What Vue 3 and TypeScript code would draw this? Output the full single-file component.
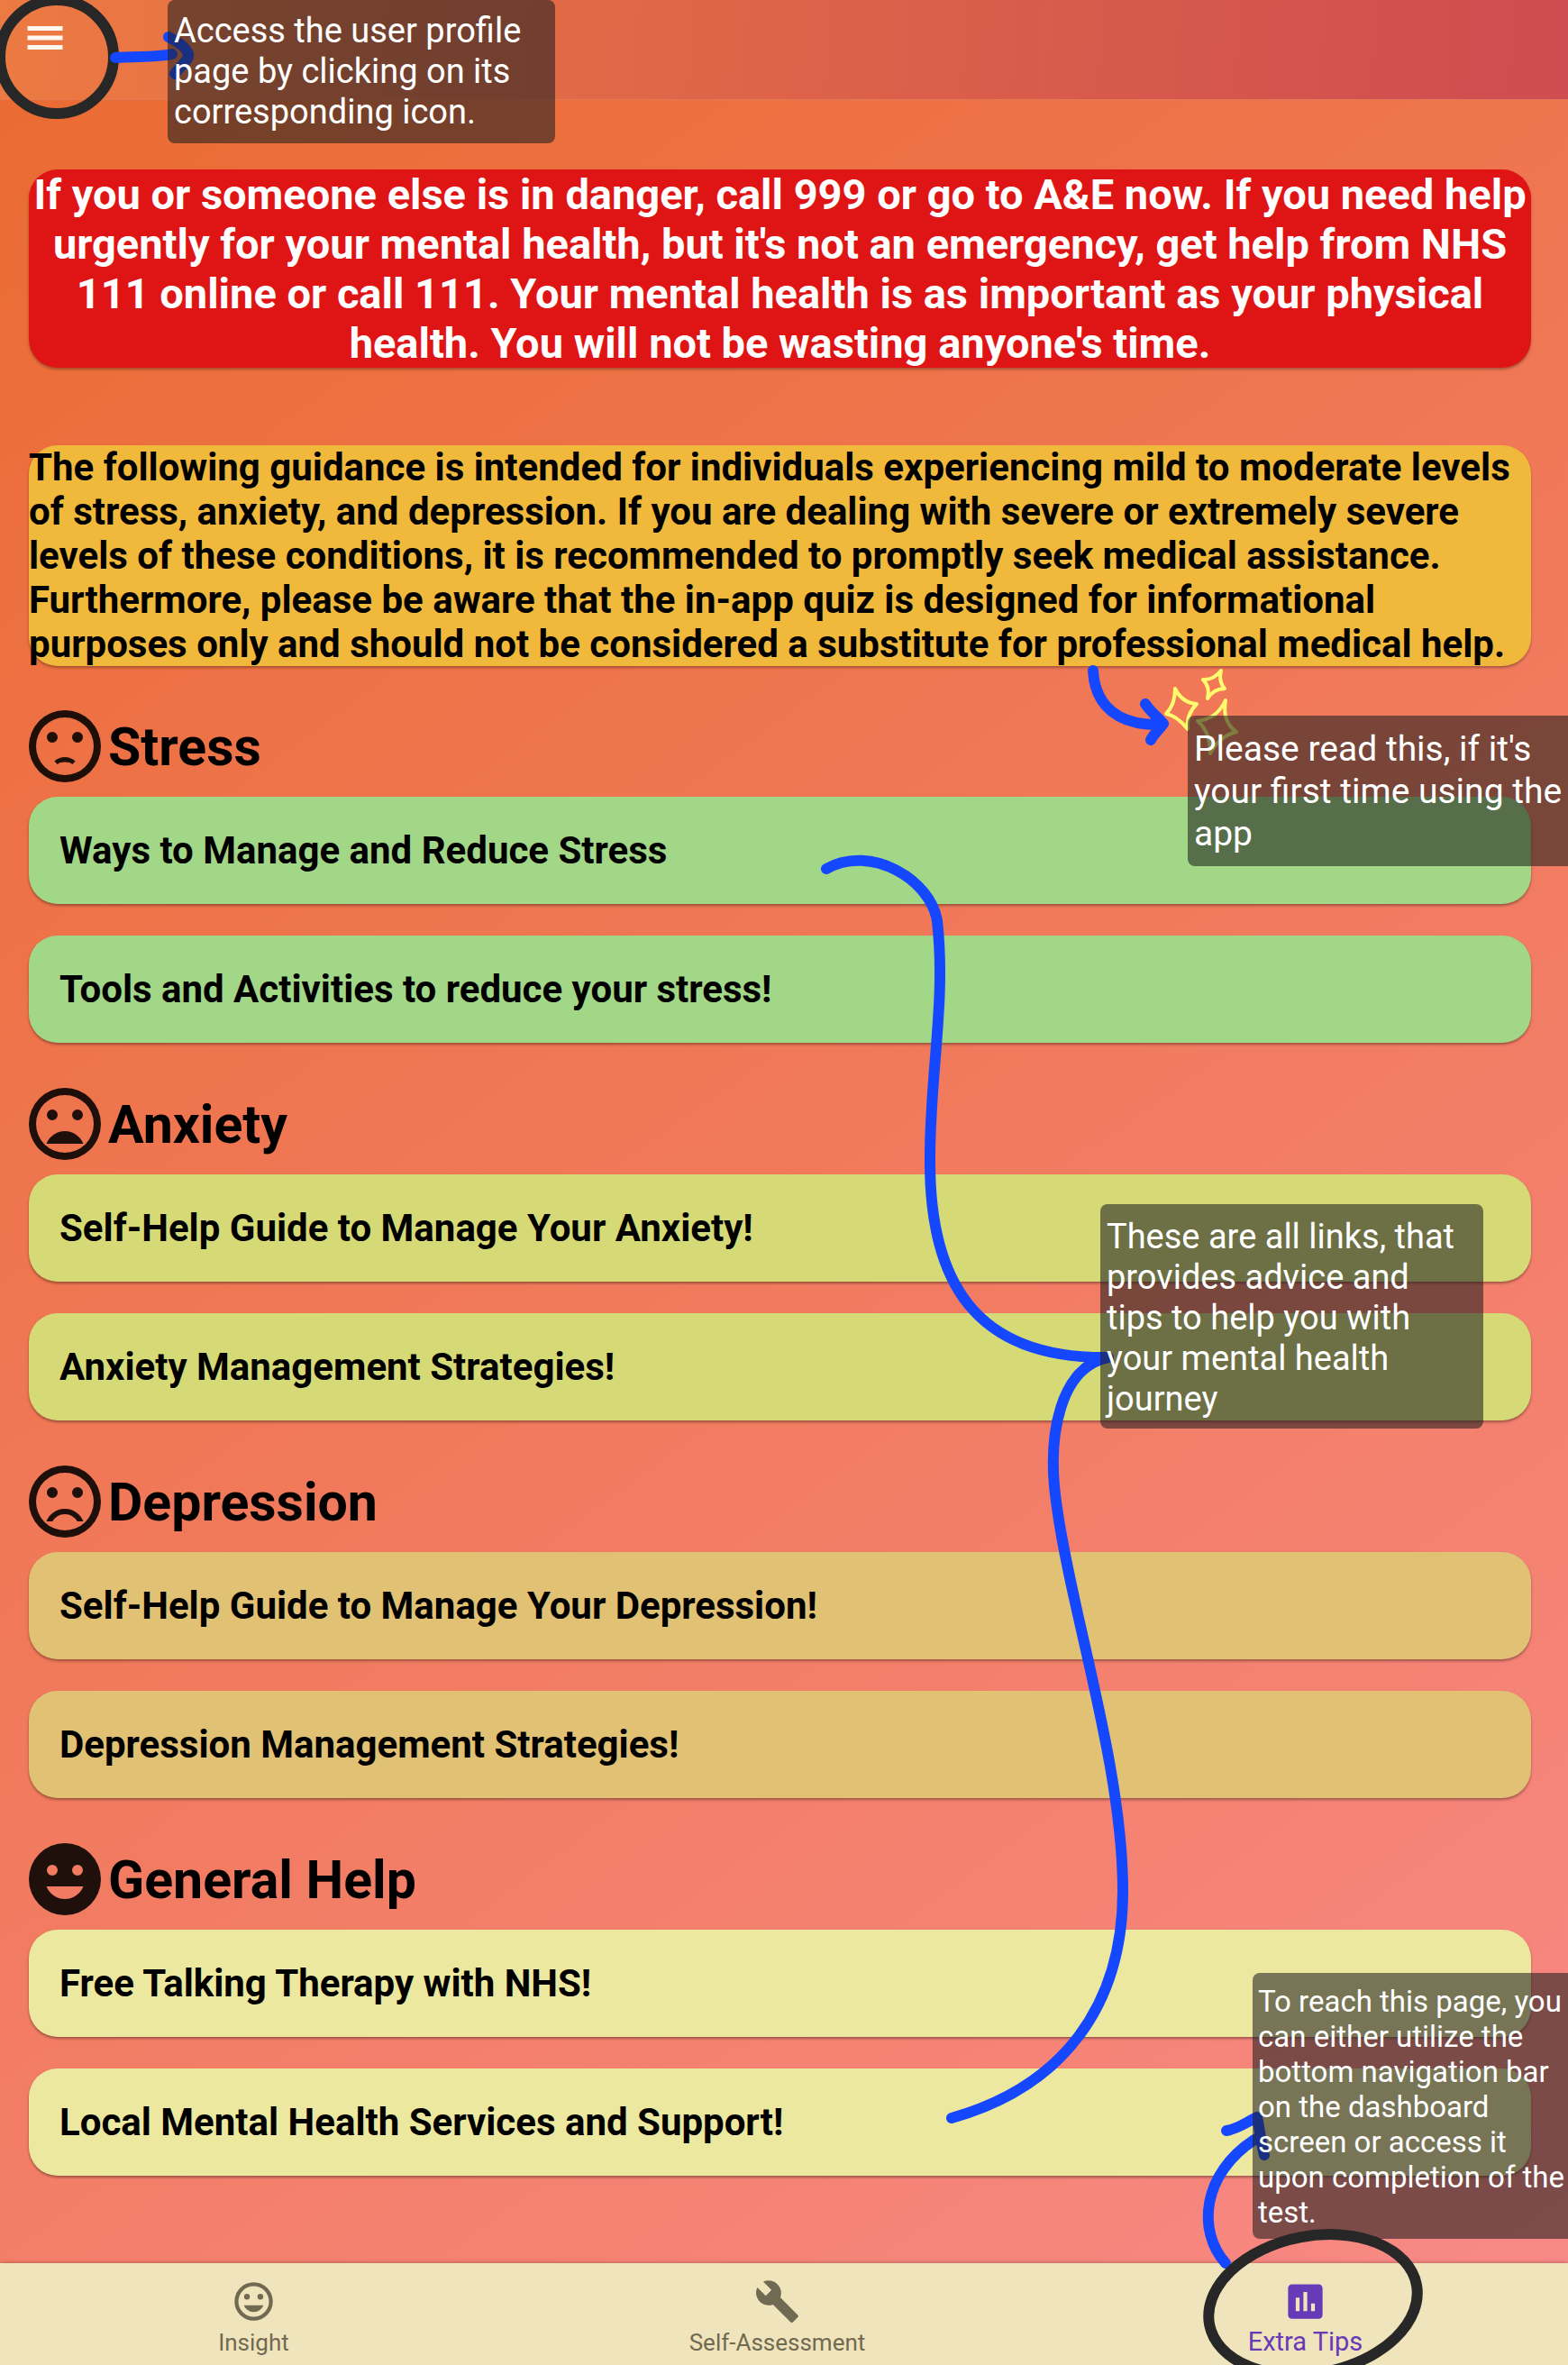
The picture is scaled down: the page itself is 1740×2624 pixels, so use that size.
<script setup lang="ts">
type Mood = 'uneasy' | 'anxious' | 'sad' | 'happy'

interface Topic {
  title: string
  mood: Mood
  tone: string
  links: string[]
}

const topics: Topic[] = [
  {
    title: 'Stress',
    mood: 'uneasy',
    tone: 'green',
    links: ['Ways to Manage and Reduce Stress', 'Tools and Activities to reduce your stress!'],
  },
  {
    title: 'Anxiety',
    mood: 'anxious',
    tone: 'lime',
    links: ['Self-Help Guide to Manage Your Anxiety!', 'Anxiety Management Strategies!'],
  },
  {
    title: 'Depression',
    mood: 'sad',
    tone: 'sand',
    links: ['Self-Help Guide to Manage Your Depression!', 'Depression Management Strategies!'],
  },
  {
    title: 'General Help',
    mood: 'happy',
    tone: 'cream',
    links: ['Free Talking Therapy with NHS!', 'Local Mental Health Services and Support!'],
  },
]

const mouths: Record<Mood, string> = {
  uneasy: 'M12 15c-1.1 0-2.1.4-2.9 1.1l.8.9c.6-.4 1.3-.6 2.1-.6s1.5.2 2.1.6l.8-.9c-.8-.7-1.8-1.1-2.9-1.1z',
  anxious: 'M12 14c-2.33 0-4.31 1.46-5.11 3.5h10.22c-.8-2.04-2.78-3.5-5.11-3.5z',
  sad: 'M12 14c-2.33 0-4.32 1.45-5.12 3.5h1.67c.69-1.19 1.97-2 3.45-2s2.75.81 3.45 2h1.67c-.8-2.05-2.79-3.5-5.12-3.5z',
  happy: 'M12 17.5c2.33 0 4.31-1.46 5.11-3.5H6.89c.8 2.04 2.78 3.5 5.11 3.5z',
}

const ring = 'M12 2a10 10 0 1 0 0 20a10 10 0 0 0 0-20zM12 20a8 8 0 1 1 0-16a8 8 0 0 1 0 16z'
const disc = 'M12 2a10 10 0 1 0 0 20a10 10 0 0 0 0-20z'
const eyes = 'M8.5 8a1.5 1.5 0 1 0 0 3a1.5 1.5 0 0 0 0-3zM15.5 8a1.5 1.5 0 1 0 0 3a1.5 1.5 0 0 0 0-3z'

const facePath = (mood: Mood) => `${mood === 'happy' ? disc : ring}${eyes}${mouths[mood]}`

const tabs = [
  { label: 'Insight', active: false, path: `${ring}${eyes}${mouths.happy}` },
  {
    label: 'Self-Assessment',
    active: false,
    path: 'M22.7 19l-9.1-9.1c.9-2.3.4-5-1.5-6.9-2-2-5-2.4-7.4-1.3L9 6 6 9 1.6 4.7C.4 7.1.9 10.1 2.9 12.1c1.9 1.9 4.6 2.4 6.9 1.5l9.1 9.1c.4.4 1 .4 1.4 0l2.3-2.3c.5-.4.5-1.1.1-1.4z',
  },
  {
    label: 'Extra Tips',
    active: true,
    path: 'M19 3H5c-1.1 0-2 .9-2 2v14c0 1.1.9 2 2 2h14c1.1 0 2-.9 2-2V5c0-1.1-.9-2-2-2zM9 17H7v-7h2v7zm4 0h-2V7h2v10zm4 0h-2v-4h2v4z',
  },
]
</script>

<template>
  <div class="page">
    <header class="top-bar">
      <button class="menu" type="button" aria-label="Open user profile">
        <svg viewBox="0 0 24 24"><path d="M3 18h18v-2.3H3zM3 13.15h18v-2.3H3zM3 6v2.3h18V6z" /></svg>
      </button>
    </header>

    <main class="content">
      <p class="banner danger">
        If you or someone else is in danger, call 999 or go to A&amp;E now. If you need help urgently for your mental
        health, but it's not an emergency, get help from NHS 111 online or call 111. Your mental health is as important
        as your physical health. You will not be wasting anyone's time.
      </p>
      <p class="banner guidance">
        The following guidance is intended for individuals experiencing mild to moderate levels of stress, anxiety, and
        depression. If you are dealing with severe or extremely severe levels of these conditions, it is recommended to
        promptly seek medical assistance. Furthermore, please be aware that the in-app quiz is designed for
        informational purposes only and should not be considered a substitute for professional medical help.
      </p>

      <section v-for="topic in topics" :key="topic.title" class="topic">
        <h2 class="topic-title">
          <svg class="face" viewBox="2 2 20 20" aria-hidden="true">
            <path :d="facePath(topic.mood)" fill-rule="evenodd" />
          </svg>
          {{ topic.title }}
        </h2>
        <a v-for="link in topic.links" :key="link" href="#" class="card" :class="topic.tone">{{ link }}</a>
      </section>
    </main>

    <nav class="tabs">
      <a v-for="tab in tabs" :key="tab.label" href="#" class="tab" :class="{ active: tab.active }">
        <svg viewBox="0 0 24 24" aria-hidden="true"><path :d="tab.path" fill-rule="evenodd" /></svg>
        <span>{{ tab.label }}</span>
      </a>
    </nav>

    <svg class="ink" viewBox="0 0 1740 2624" preserveAspectRatio="none" aria-hidden="true">
      <circle class="marker" cx="63" cy="63" r="63" />
      <g class="pen">
        <path d="M128 64C150 62 172 64 191 60M187 41C196 46 206 51 209 60C210 67 199 74 194 82" />
        <path d="M1213 744C1215 784 1242 805 1287 804M1271 781C1277 790 1284 795 1291 803C1285 811 1280 815 1277 821" />
        <path
          d="M917 964C966 936 1033 976 1040 1022C1050 1110 1032 1190 1032 1285C1031 1420 1080 1508 1230 1506C1178 1516 1160 1590 1173 1673C1189 1790 1246 1960 1246 2098C1246 2225 1180 2315 1056 2350"
        />
        <path d="M1360 2511C1328 2475 1334 2412 1392 2374M1361 2364C1374 2362 1384 2354 1395 2349C1398 2362 1399 2377 1403 2391" />
      </g>
      <g class="stars">
        <path d="M1304 764Q1312 780 1328 781Q1316 793 1318 809Q1306 794 1294 792Q1304 782 1304 764Z" />
        <path d="M1355 744Q1352 756 1359 764Q1347 764 1340 775Q1343 762 1335 754Q1346 755 1355 744Z" />
        <path d="M1360 777Q1356 801 1372 812Q1353 817 1343 836Q1343 812 1329 800Q1350 798 1360 777Z" />
      </g>
    </svg>

    <aside class="note note-profile">Access the user profile page by clicking on its corresponding icon.</aside>
    <aside class="note note-read">Please read this, if it's your first time using the app</aside>
    <aside class="note note-links">
      These are all links, that provides advice and tips to help you with your mental health journey
    </aside>
    <aside class="note note-reach">
      To reach this page, you can either utilize the bottom navigation bar on the dashboard screen or access it upon
      completion of the test.
    </aside>

    <svg class="ink" viewBox="0 0 1740 2624" preserveAspectRatio="none" aria-hidden="true">
      <ellipse class="marker" cx="1457" cy="2557" rx="117" ry="76" transform="rotate(-11 1457 2557)" />
    </svg>
  </div>
</template>

<style>
body {
  margin: 0;
}
</style>

<style scoped>
.page {
  position: relative;
  display: flex;
  flex-direction: column;
  min-height: 100vh;
  overflow: hidden;
  font-family: Roboto, "Liberation Sans", sans-serif;
  color: #000;
  background: linear-gradient(144deg, #ea6a30, #f88a88);
}

.top-bar {
  box-sizing: border-box;
  height: 111px;
  padding: 16px 24px;
  background: linear-gradient(94deg, #ec7a42, #cf4c50);
  border-bottom: 1px solid #e07a58;
}

.menu {
  display: block;
  width: 52px;
  height: 52px;
  padding: 0;
  border: 0;
  background: none;
}

.menu svg {
  display: block;
  fill: #fff8f0;
}

.content {
  flex: 1;
  padding: 77px 41px 97px 32px;
}

.banner {
  margin: 0;
  border-radius: 32px;
  font-weight: 700;
  box-shadow: 0 2px 3px rgba(0, 0, 0, 0.3);
}

.danger {
  margin-bottom: 86px;
  color: #fff;
  background: #df1515;
  font-size: 47px;
  line-height: 55px;
  text-align: center;
}

.guidance {
  margin-bottom: 41px;
  background: #f1b93b;
  font-size: 42px;
  line-height: 49px;
}

.topic + .topic {
  margin-top: 42px;
}

.topic-title {
  display: flex;
  align-items: center;
  gap: 8px;
  height: 96px;
  margin: 0 0 8px;
  font-size: 59px;
  font-weight: 700;
}

.face {
  width: 80px;
  height: 80px;
  fill: rgba(0, 0, 0, 0.87);
}

.card {
  display: flex;
  align-items: center;
  height: 119px;
  padding: 0 34px;
  border-radius: 32px;
  font-size: 42px;
  font-weight: 700;
  color: #000;
  text-decoration: none;
  box-shadow: 0 2px 3px rgba(0, 0, 0, 0.35);
}

.card + .card {
  margin-top: 35px;
}

.green {
  background: #a3d788;
}

.lime {
  background: #d6da76;
}

.sand {
  background: #e1c174;
}

.cream {
  background: #ece89f;
}

.tabs {
  display: grid;
  grid-template-columns: 563fr 599fr 573fr;
  height: 113px;
  padding-right: 5px;
  background: #f0e4bc;
  box-shadow: 0 0 4px rgba(0, 0, 0, 0.35);
}

.tab {
  display: flex;
  flex-direction: column;
  align-items: center;
  padding-top: 17px;
  color: #706a52;
  font-size: 26px;
  line-height: 40px;
  text-decoration: none;
}

.tab svg {
  width: 51px;
  height: 51px;
  fill: currentColor;
}

.tab.active {
  color: #673ab7;
  font-size: 29px;
  line-height: 38px;
}

.ink {
  position: absolute;
  inset: 0;
  width: 100%;
  height: 100%;
  fill: none;
  stroke-linecap: round;
  stroke-linejoin: round;
  pointer-events: none;
}

.pen {
  stroke: #1547ff;
  stroke-width: 12px;
}

.stars {
  stroke: #fffb6e;
  stroke-width: 4px;
}

.marker {
  stroke: #272727;
  stroke-width: 12px;
}

.note {
  position: absolute;
  box-sizing: border-box;
  padding: 12px 7px;
  border-radius: 8px;
  color: #fff;
  background: rgba(30, 30, 30, 0.57);
  font-size: 38px;
  line-height: 45px;
}

.note-profile {
  top: 0;
  left: 186px;
  width: 430px;
}

.note-read {
  top: 794px;
  right: 0;
  width: 422px;
  padding: 14px 0 12px 7px;
  border-radius: 8px 0 0 8px;
  font-size: 39px;
  line-height: 47px;
}

.note-links {
  top: 1336px;
  right: 94px;
  width: 425px;
  padding: 14px 24px 10px 7px;
}

.note-reach {
  right: 0;
  bottom: 140px;
  width: 350px;
  padding: 12px 0 10px 6px;
  border-radius: 8px 0 0 8px;
  font-size: 33px;
  line-height: 39px;
}
</style>
